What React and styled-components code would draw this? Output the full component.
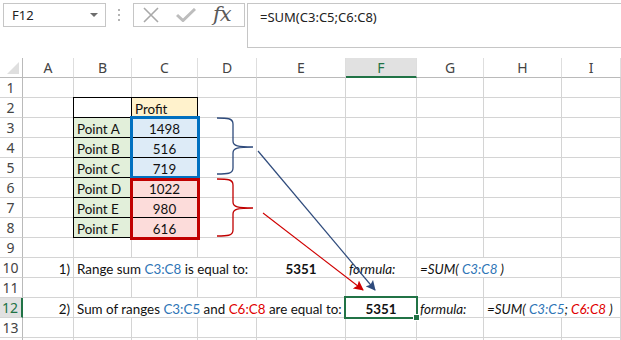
import React from 'react';
import styled, { createGlobalStyle, css } from 'styled-components';

const GlobalStyle = createGlobalStyle`
  html, body { margin: 0; padding: 0; background: #fff; }
  body { font-family: 'Lato', 'Liberation Sans', sans-serif; }
`;

const green = '#217346';
const grid = '#d4d4d4';

const Page = styled.div`
  position: relative;
  width: 621px;
  height: 340px;
  overflow: hidden;
  background: #fff;
`;

const Toolbar = styled.div`
  display: flex;
  align-items: flex-start;
  height: 58px;
  padding: 3px 0 0 3px;
  box-sizing: border-box;
`;

const NameBox = styled.div`
  display: flex;
  align-items: center;
  justify-content: space-between;
  width: 103px;
  height: 24px;
  box-sizing: border-box;
  border: 1px solid #c6c6c6;
  padding: 0 7px 0 8px;
  font: 13px 'Noto Sans', sans-serif;
  color: #222;
`;

const Caret = styled.span`
  width: 0;
  height: 0;
  border-left: 4px solid transparent;
  border-right: 4px solid transparent;
  border-top: 4px solid #6d6d6d;
`;

const Grip = styled.div`
  display: flex;
  flex-direction: column;
  gap: 3px;
  margin: 6px 13px 0 12px;
  span {
    width: 2px;
    height: 2px;
    background: #b4b4b4;
  }
`;

const FxBox = styled.div`
  display: flex;
  align-items: center;
  width: 112px;
  height: 24px;
  box-sizing: border-box;
  border: 1px solid #c6c6c6;
  padding: 0 0 0 9px;
  gap: 17px;
`;

const Fx = styled.span`
  font: italic 21px 'DejaVu Serif', 'Liberation Serif', serif;
  color: #5a5a5a;
  letter-spacing: -1px;
  margin-top: -3px;
`;

const FormulaBox = styled.div`
  margin-left: 2px;
  flex: 1;
  height: 45px;
  box-sizing: border-box;
  border: 1px solid #c6c6c6;
  border-right: none;
  padding: 4px 0 0 12px;
  font: 13px 'Noto Sans', sans-serif;
  color: #222;
`;

const Sheet = styled.div`
  display: grid;
  grid-template-columns: 23px 51px 58px 66px 59px 89px 71px 67px 78px 59px;
  grid-template-rows: repeat(15, 20px);
`;

const Corner = styled.div`
  grid-row: 1;
  grid-column: 1;
  box-sizing: border-box;
  border-right: 1px solid #bababa;
  border-bottom: 1px solid #bababa;
  position: relative;
  &::after {
    content: '';
    position: absolute;
    right: 3px;
    bottom: 3px;
    border-left: 12px solid transparent;
    border-bottom: 12px solid #dfdfdf;
  }
`;

const ColHead = styled.div`
  grid-row: 1;
  grid-column: ${p => p.$col};
  display: flex;
  align-items: center;
  justify-content: center;
  box-sizing: border-box;
  border-right: 1px solid #dedede;
  border-bottom: 1px solid #bababa;
  font: 14px 'Noto Sans', sans-serif;
  color: #444;
  ${p => p.$active && css`
    background: #e1e1e1;
    color: ${green};
    border-bottom: 2px solid ${green};
  `}
`;

const RowHead = styled.div`
  grid-row: ${p => p.$row};
  grid-column: 1;
  display: flex;
  align-items: center;
  justify-content: center;
  box-sizing: border-box;
  border-right: 1px solid #bababa;
  border-bottom: 1px solid ${grid};
  font: 14px 'Noto Sans', sans-serif;
  color: #444;
  padding-right: 1px;
  ${p => p.$active && css`
    background: #e1e1e1;
    color: ${green};
    border-right: 2px solid ${green};
  `}
`;

const Cell = styled.div`
  grid-row: ${p => p.$row};
  grid-column: ${p => p.$col} / span ${p => p.$span || 1};
  display: flex;
  align-items: center;
  justify-content: ${p => p.$align || 'flex-start'};
  box-sizing: border-box;
  border-right: 1px solid ${p => (p.$black ? '#000' : grid)};
  border-bottom: 1px solid ${p => (p.$black ? '#000' : grid)};
  background: ${p => p.$bg || '#fff'};
  padding: 2px 3px 0;
  font-size: 13.4px;
  font-weight: ${p => (p.$bold ? 700 : 400)};
  font-style: ${p => (p.$italic ? 'italic' : 'normal')};
  color: #111;
  white-space: pre;
`;

const TableFrame = styled.div`
  grid-row: 3 / 10;
  grid-column: 3 / 5;
  margin: -1px 0 0 -1px;
  border-top: 1px solid #000;
  border-left: 1px solid #000;
  pointer-events: none;
`;

const RangeOutline = styled.div`
  grid-row: ${p => p.$rows};
  grid-column: 4;
  box-sizing: border-box;
  border: 3px solid ${p => p.$color};
  margin: ${p => p.$margin};
  z-index: 2;
  pointer-events: none;
`;

const Selection = styled.div`
  grid-row: 13;
  grid-column: 7;
  margin: -2px -1px -1px -2px;
  border: 2px solid ${green};
  position: relative;
  z-index: 2;
  pointer-events: none;
  &::after {
    content: '';
    position: absolute;
    right: -4px;
    bottom: -4px;
    width: 5px;
    height: 5px;
    background: ${green};
    border: 1px solid #fff;
  }
`;

const Blue = styled.span`
  color: #2e75b6;
`;

const Red = styled.span`
  color: #e00000;
`;

const Notes = styled.svg`
  position: absolute;
  left: 0;
  top: 0;
  pointer-events: none;
  z-index: 3;
`;

const cols = ['A', 'B', 'C', 'D', 'E', 'F', 'G', 'H', 'I'];

const points = [
  ['Point A', '1498', '#ddebf7'],
  ['Point B', '516', '#ddebf7'],
  ['Point C', '719', '#ddebf7'],
  ['Point D', '1022', '#fcdcda'],
  ['Point E', '980', '#fcdcda'],
  ['Point F', '616', '#fcdcda'],
];

// filled cells, keyed by sheet row; col is grid column (A = 2)
const filled = [
  { row: 2, col: 3, black: true },
  { row: 2, col: 4, black: true, bg: '#fff2cc', content: 'Profit' },
  ...points.flatMap(([name, val, bg], i) => [
    { row: 3 + i, col: 3, black: true, bg: '#e2efda', content: name },
    { row: 3 + i, col: 4, black: true, bg, align: 'center', content: val },
  ]),
  { row: 10, col: 2, align: 'flex-end', content: '1)' },
  { row: 10, col: 3, span: 3, content: <>Range sum <Blue>C3:C8</Blue> is equal to:</> },
  { row: 10, col: 6, align: 'center', bold: true, content: '5351' },
  { row: 10, col: 7, italic: true, content: 'formula:' },
  { row: 10, col: 8, span: 2, italic: true, content: <>=SUM(<Blue> C3:C8</Blue> )</> },
  { row: 12, col: 2, align: 'flex-end', content: '2)' },
  {
    row: 12, col: 3, span: 4,
    content: <>Sum of ranges <Blue>C3:C5</Blue> and <Red>C6:C8</Red> are equal to:</>,
  },
  { row: 12, col: 7, align: 'center', bold: true, content: '5351' },
  { row: 12, col: 8, italic: true, content: 'formula:' },
  { row: 12, col: 9, span: 2, italic: true, content: <>=SUM(<Blue> C3:C5</Blue>;<Red> C6:C8</Red> )</> },
];

const ROWS = 13;

function buildCells() {
  const cells = [];
  for (let r = 1; r <= ROWS + 1; r++) {
    const inRow = filled.filter(c => c.row === r);
    let c = 2;
    while (c <= 10) {
      const f = inRow.find(x => x.col === c);
      if (f) {
        cells.push(
          <Cell
            key={`${r}-${c}`}
            $row={r + 1}
            $col={c}
            $span={f.span}
            $black={f.black}
            $bg={f.bg}
            $align={f.align}
            $bold={f.bold}
            $italic={f.italic}
          >
            {f.content}
          </Cell>
        );
        c += f.span || 1;
      } else {
        cells.push(<Cell key={`${r}-${c}`} $row={r + 1} $col={c} />);
        c += 1;
      }
    }
  }
  return cells;
}

function Brace({ top, tip, bottom, color }) {
  const d = `M217,${top} C227,${top} 233,${top} 233,${top + 6} L233,${tip - 6}
    C233,${tip - 1} 238,${tip} 253,${tip} C238,${tip} 233,${tip + 1} 233,${tip + 6}
    L233,${bottom - 6} C233,${bottom} 227,${bottom} 217,${bottom}`;
  return <path d={d} fill="none" stroke={color} strokeWidth="1.3" />;
}

export default function App() {
  return (
    <Page>
      <GlobalStyle />
      <Toolbar>
        <NameBox>
          F12
          <Caret />
        </NameBox>
        <Grip>
          <span />
          <span />
          <span />
        </Grip>
        <FxBox>
          <svg width="16" height="16" viewBox="0 0 16 16">
            <path d="M1 1 L15 15 M15 1 L1 15" stroke="#a9a9a9" strokeWidth="1.6" />
          </svg>
          <svg width="20" height="14" viewBox="0 0 20 14">
            <path d="M1 7 L7 12.5 L19 1" fill="none" stroke="#bdbdbd" strokeWidth="3" />
          </svg>
          <Fx>fx</Fx>
        </FxBox>
        <FormulaBox>=SUM(C3:C5;C6:C8)</FormulaBox>
      </Toolbar>
      <Sheet>
        <Corner />
        {cols.map((l, i) => (
          <ColHead key={l} $col={i + 2} $active={l === 'F'}>
            {l}
          </ColHead>
        ))}
        {Array.from({ length: ROWS + 1 }, (_, i) => (
          <RowHead key={i} $row={i + 2} $active={i + 1 === 12}>
            {i < ROWS ? i + 1 : ''}
          </RowHead>
        ))}
        {buildCells()}
        <TableFrame />
        <RangeOutline $rows="4 / 7" $color="#0070c0" $margin="-2px -2px -1px -2px" />
        <RangeOutline $rows="7 / 10" $color="#c00000" $margin="0 -2px -2px -2px" />
        <Selection />
      </Sheet>
      <Notes width="621" height="340" viewBox="0 0 621 340">
        <defs>
          <marker id="headBlue" viewBox="0 0 10 10" refX="9" refY="5" markerWidth="10" markerHeight="10" markerUnits="userSpaceOnUse" orient="auto">
            <path d="M0 0 L10 5 L0 10 L2 5 Z" fill="#2f4b7c" />
          </marker>
          <marker id="headRed" viewBox="0 0 10 10" refX="9" refY="5" markerWidth="10" markerHeight="10" markerUnits="userSpaceOnUse" orient="auto">
            <path d="M0 0 L10 5 L0 10 L2 5 Z" fill="#d00000" />
          </marker>
        </defs>
        <Brace top={118} tip={147} bottom={174} color="#2f4b7c" />
        <Brace top={179} tip={208} bottom={236} color="#c00000" />
        <line x1="258" y1="151" x2="375" y2="290" stroke="#2f4b7c" strokeWidth="1.2" markerEnd="url(#headBlue)" />
        <line x1="263" y1="213" x2="363" y2="290" stroke="#d00000" strokeWidth="1.1" markerEnd="url(#headRed)" />
      </Notes>
    </Page>
  );
}
